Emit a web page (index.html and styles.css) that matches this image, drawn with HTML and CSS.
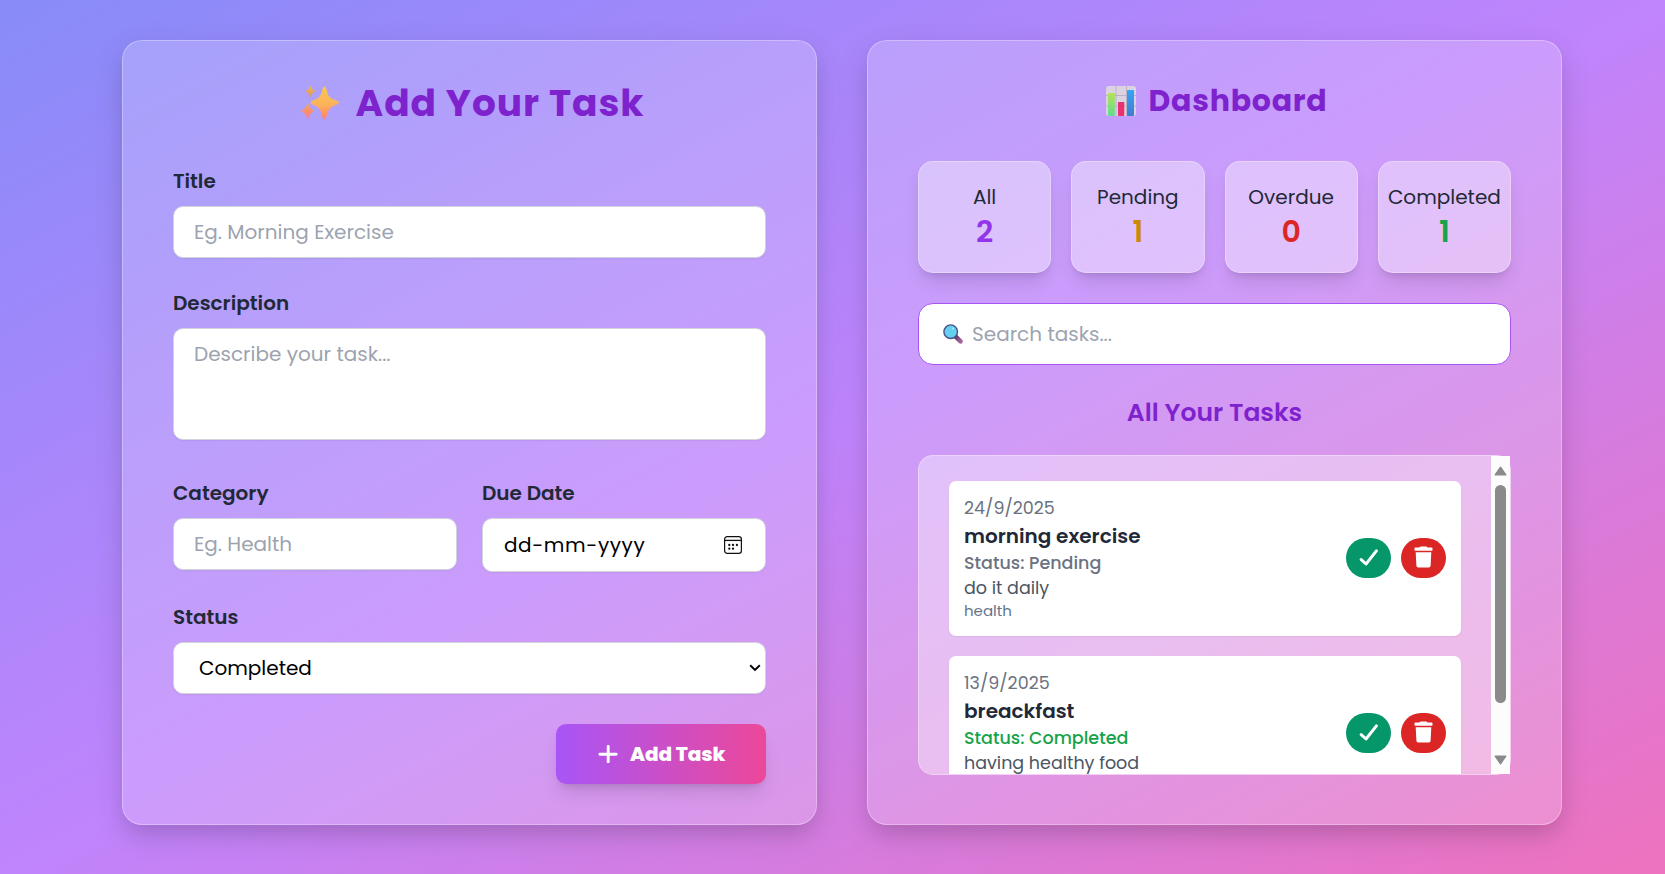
FILE: index.html
```html
<!DOCTYPE html>
<html lang="en">
<head>
<meta charset="utf-8">
<title>Task Manager</title>
<link rel="stylesheet" href="styles.css">
</head>
<body>
<svg width="0" height="0" class="defs">
  <defs>
    <linearGradient id="gold" x1="0" y1="0" x2="0" y2="1"><stop offset="0" stop-color="#f9c950"/><stop offset=".55" stop-color="#fbb25b"/><stop offset="1" stop-color="#ff8068"/></linearGradient>
    <linearGradient id="goldSmall" x1="0" y1="0" x2="0" y2="1"><stop offset="0" stop-color="#f0b94f"/><stop offset="1" stop-color="#dc9460"/></linearGradient>
    <linearGradient id="coral" x1="0" y1="0" x2="0" y2="1"><stop offset="0" stop-color="#f4a35c"/><stop offset="1" stop-color="#ff7f7c"/></linearGradient>
    <linearGradient id="green" x1="0" y1="0" x2="0" y2="1"><stop offset="0" stop-color="#b5e255"/><stop offset="1" stop-color="#5fdb91"/></linearGradient>
    <linearGradient id="blue" x1="0" y1="0" x2="0" y2="1"><stop offset="0" stop-color="#35a6f5"/><stop offset="1" stop-color="#3f7cd0"/></linearGradient>
    <linearGradient id="handle" x1="0" y1="0" x2="1" y2="1"><stop offset="0" stop-color="#633662"/><stop offset="1" stop-color="#a5669f"/></linearGradient>
    <symbol id="check" viewBox="0 0 20 18"><path d="M2.2 10.6 7 15 17.4 1.9" fill="none" stroke="#fff" stroke-width="3" stroke-linecap="round" stroke-linejoin="round"/></symbol>
    <symbol id="trash" viewBox="0 0 19 22"><path fill="#fff" d="M.5 2.4Q.5 1.6 1.3 1.6H5.3L6.2.8Q6.6.5 7.1.5H11.9Q12.400.5 12.800.8L13.700 1.600H17.700Q18.500 1.600 18.500 2.400V4.100Q18.500 4.700 17.900 4.700H1.100Q.500 4.700.500 4.100ZM1.700 6.300H17.300L16.600 19.700Q16.500 21.400 14.800 21.400H4.200Q2.500 21.400 2.400 19.700Z"/></symbol>
  </defs>
</svg>
<main class="page">
  <section class="card form-card">
    <h1 class="title">
      <svg class="sparkles" viewBox="0 0 38 34" width="38" height="34">
        <path fill="url(#gold)" d="M23.500.5Q25 .5 25.600 3.500C27 10 28.500 12.300 35 14.300Q37.900 15.300 37.900 16.700Q37.900 18.100 35 19C28.500 21 27.500 24 25.600 30.500Q24.700 33.300 23.300 33.300Q21.900 33.300 21.200 30.500C19.500 24 18.500 21 12.200 19Q9.500 18.100 9.500 16.700Q9.500 15.300 12.200 14.300C18.500 12.300 19.800 10 21.400 3.500Q22 .5 23.500.5Z"/>
        <path fill="url(#goldSmall)" stroke="url(#goldSmall)" stroke-width=".8" stroke-linejoin="round" d="M9.500.5Q10.300 3.900 14 5.200Q10.400 6.600 9.500 10.700Q8.400 6.600 5 5.200Q8.600 3.900 9.500.5Z"/>
        <path fill="url(#coral)" stroke="url(#coral)" stroke-width=".9" stroke-linejoin="round" d="M6.800 18Q7.900 22.800 12.700 24.900Q7.900 26.900 7 32.200Q5.500 27 .7 24.900Q5.600 22.800 6.800 18Z"/>
      </svg>
      <span>Add Your Task</span>
    </h1>
    <div class="field">
      <label class="label">Title</label>
      <input class="input" placeholder="Eg. Morning Exercise">
    </div>
    <div class="field">
      <label class="label">Description</label>
      <textarea class="input area" placeholder="Describe your task..."></textarea>
    </div>
    <div class="pair">
      <div class="field">
        <label class="label">Category</label>
        <input class="input" placeholder="Eg. Health">
      </div>
      <div class="field">
        <label class="label">Due Date</label>
        <div class="input date"><span>dd-mm-yyyy</span>
          <svg width="18" height="18" viewBox="0 0 18 18"><rect x=".6" y=".6" width="16.800" height="16.800" rx="2.600" fill="none" stroke="#111" stroke-width="1.200"/><path d="M1 4.400H17" stroke="#111" stroke-width="1.300"/><g fill="#111"><circle cx="5.300" cy="9" r="1.150"/><circle cx="9" cy="9" r="1.150"/><circle cx="12.900" cy="9" r="1.150"/><circle cx="5.300" cy="12.700" r="1.150"/><circle cx="9" cy="12.700" r="1.150"/></g></svg>
        </div>
      </div>
    </div>
    <div class="field">
      <label class="label">Status</label>
      <div class="input select"><span>Completed</span>
        <svg width="12" height="8" viewBox="0 0 12 8"><path d="M1.200 1.200 6 5.900 10.800 1.200" fill="none" stroke="#000" stroke-width="2"/></svg>
      </div>
    </div>
    <button class="add">
      <svg width="20" height="18" viewBox="0 0 20 18"><path d="M1.900 9.300H18.200M10.200 1.400V16.900" stroke="#fff" stroke-width="2.900" stroke-linecap="round"/></svg>
      <span>Add Task</span>
    </button>
  </section>

  <section class="card dash-card">
    <h2 class="title dash-title">
      <svg class="chart" width="30" height="30" viewBox="0 0 30 30">
        <rect width="30" height="30" rx="3" fill="#dcd3e2"/>
        <path d="M0 9.500H30M0 20H30M10 0V30M20.500 0V30" stroke="#b7adc2" stroke-width=".9"/>
        <rect x="2" y="7" width="6.800" height="23" rx=".8" fill="url(#green)"/>
        <rect x="12" y="16" width="6.300" height="14" rx=".8" fill="#e6336f"/>
        <rect x="21" y="4" width="7" height="26" rx=".8" fill="url(#blue)"/>
      </svg>
      <span>Dashboard</span>
    </h2>
    <div class="stats">
      <div class="stat"><span class="stat-name">All</span><span class="stat-num violet">2</span></div>
      <div class="stat"><span class="stat-name">Pending</span><span class="stat-num amber">1</span></div>
      <div class="stat"><span class="stat-name">Overdue</span><span class="stat-num red">0</span></div>
      <div class="stat"><span class="stat-name">Completed</span><span class="stat-num green">1</span></div>
    </div>
    <div class="search">
      <svg width="20" height="20" viewBox="0 0 20 20"><path d="M12.700 12.700 17.500 17.300" stroke="url(#handle)" stroke-width="4.600" stroke-linecap="round"/><circle cx="7.700" cy="7.700" r="6.800" fill="#62d0ee" stroke="#4b5186" stroke-width="1.400"/><circle cx="10" cy="4.600" r="1.100" fill="#a5e8fa"/></svg>
      <span>Search tasks...</span>
    </div>
    <h3 class="subtitle">All Your Tasks</h3>
    <div class="list">
      <div class="items">
        <article class="item">
          <div class="info">
            <span class="date-text">24/9/2025</span>
            <span class="name">morning exercise</span>
            <span class="status">Status: Pending</span>
            <span class="desc">do it daily</span>
            <span class="cat">health</span>
          </div>
          <button class="round ok"><svg width="20" height="18"><use href="#check"/></svg></button>
          <button class="round del"><svg width="19" height="22"><use href="#trash"/></svg></button>
        </article>
        <article class="item">
          <div class="info">
            <span class="date-text">13/9/2025</span>
            <span class="name">breackfast</span>
            <span class="status done">Status: Completed</span>
            <span class="desc">having healthy food</span>
          </div>
          <button class="round ok"><svg width="20" height="18"><use href="#check"/></svg></button>
          <button class="round del"><svg width="19" height="22"><use href="#trash"/></svg></button>
        </article>
      </div>
      <div class="scrollbar">
        <svg width="13" height="10" viewBox="0 0 13 10"><path d="M6.500 1.200 11.800 8.800H1.200Z" fill="#8a8a8a" stroke="#8a8a8a" stroke-width="1.400" stroke-linejoin="round"/></svg>
        <div class="thumb"></div>
        <svg class="down" width="13" height="10" viewBox="0 0 13 10"><path d="M6.500 8.800 11.800 1.200H1.200Z" fill="#8a8a8a" stroke="#8a8a8a" stroke-width="1.400" stroke-linejoin="round"/></svg>
      </div>
    </div>
  </section>
</main>
</body>
</html>
```
FILE: styles.css
```css
* { box-sizing: border-box; }
body {
  margin: 0;
  height: 874px;
  overflow: hidden;
  font-family: Poppins, Inter, "Open Sans", sans-serif;
  font-size: 20px;
  color: #1f2937;
  background: linear-gradient(to bottom right, #888bf9, #c084fc, #ee72be);
}
.defs { position: absolute; }
svg { display: block; flex: none; }
h1, h2, h3 { margin: 0; }
button { border: 0; font-family: inherit; }

.page { display: flex; gap: 50px; padding: 40px 0 0 122px; }
.card {
  display: flex;
  flex-direction: column;
  width: 695px;
  height: 785px;
  border: 1px solid rgba(255, 255, 255, .3);
  border-radius: 20px;
  background: rgba(255, 255, 255, .2);
  box-shadow: 0 10px 32px rgba(0, 0, 0, .12), 0 12px 20px -6px rgba(0, 0, 0, .1);
}
.form-card { padding: 38px 50px 0; }
.dash-card { padding: 40px 50px 0; }

.title {
  display: flex;
  align-items: center;
  justify-content: center;
  gap: 17px;
  height: 48px;
  margin-bottom: 39px;
  color: #7e22ce;
  font-size: 37.5px;
  font-weight: 700;
  letter-spacing: .94px;
}
.sparkles { margin-left: 6px; }
.chart { margin-left: 4px; }
.dash-title { height: 40px; margin-bottom: 40px; gap: 13px; font-size: 30px; letter-spacing: .75px; }

.field { display: flex; flex-direction: column; gap: 10px; margin-bottom: 30px; }
.label { height: 30px; line-height: 30px; font-weight: 600; }
.input {
  display: block;
  width: 100%;
  height: 52px;
  padding: 0 20px;
  border: 1px solid #d1d5db;
  border-radius: 10px;
  outline: 0;
  background: #fff;
  box-shadow: 0 1px 2px rgba(0, 0, 0, .06);
  font: 400 20px Poppins, Inter, "Open Sans", sans-serif;
  resize: none;
}
.input::placeholder { color: #9ca3af; opacity: 1; }
.area { height: 112px; padding: 10px 20px; line-height: 30px; margin-bottom: 8px; overflow: hidden; }
.pair { display: grid; grid-template-columns: 1fr 1fr; gap: 25px; }
.date, .select { display: flex; align-items: center; justify-content: space-between; color: #000; }
.date { height: 54px; padding: 0 23px 0 21px; letter-spacing: .6px; }
.select { padding: 0 4px 0 25px; }
.add {
  display: flex;
  align-self: flex-end;
  align-items: center;
  gap: 12px;
  width: 210px;
  height: 60px;
  padding: 0 0 0 42px;
  border-radius: 10px;
  color: #fff;
  background: linear-gradient(to right, #a855f7, #ec4899);
  box-shadow: 0 12px 19px -4px rgba(0, 0, 0, .12), 0 5px 7px -4px rgba(0, 0, 0, .12);
  font-size: 20px;
  font-weight: 800;
  letter-spacing: -.1px;
}

.stats { display: grid; grid-template-columns: repeat(4, 1fr); gap: 20px; margin-bottom: 30px; }
.stat {
  display: flex;
  flex-direction: column;
  align-items: center;
  height: 112px;
  padding-top: 20px;
  border: 1px solid rgba(255, 255, 255, .3);
  border-radius: 15px;
  background: rgba(255, 255, 255, .38);
  box-shadow: 0 12px 19px -4px rgba(0, 0, 0, .12), 0 5px 7px -4px rgba(0, 0, 0, .12);
}
.stat-name { height: 30px; line-height: 30px; }
.stat-num { height: 40px; line-height: 39px; font-size: 30px; font-weight: 600; }
.violet { color: #9333ea; }
.amber { color: #ca8a04; }
.red { color: #dc2626; }
.green { color: #16a34a; }

.search {
  display: flex;
  align-items: center;
  gap: 9px;
  height: 62px;
  padding-left: 24px;
  border: 1px solid #a855f7;
  border-radius: 15px;
  background: #fff;
  color: #9ca3af;
}
.subtitle {
  margin: 33px 0 27px;
  height: 30px;
  line-height: 30px;
  text-align: center;
  color: #7e22ce;
  font-size: 25px;
  font-weight: 600;
}

.list {
  display: flex;
  height: 320px;
  border: 1px solid rgba(255, 255, 255, .3);
  border-radius: 15px;
  background: rgba(255, 255, 255, .38);
}
.items { flex: 1; padding: 25px 30px 0; overflow: hidden; }
.item {
  display: flex;
  align-items: center;
  gap: 10px;
  height: 155px;
  margin-bottom: 20px;
  padding: 0 15px;
  border-radius: 7px;
  background: #fff;
  box-shadow: 0 1px 2px rgba(0, 0, 0, .06);
}
.info {
  display: flex;
  flex: 1;
  flex-direction: column;
  align-self: flex-start;
  padding-top: 15px;
  font-size: 17.5px;
  line-height: 25px;
  color: #4b5563;
}
.date-text { color: #6b7280; }
.name { line-height: 30px; font-size: 20px; font-weight: 600; color: #1f2937; }
.status { font-weight: 500; color: #6b7280; }
.done { color: #16a34a; }
.cat { line-height: 20px; font-size: 15px; color: #64748b; }
.round {
  display: flex;
  align-items: center;
  justify-content: center;
  width: 45px;
  height: 40px;
  margin-bottom: 1px;
  padding: 0;
  border-radius: 20px;
}
.ok { background: #059669; }
.del { background: #dc2626; }
.del svg { margin-top: -2px; }
.scrollbar {
  display: flex;
  flex-direction: column;
  align-items: center;
  width: 19px;
  padding: 10px 0 9px;
  background: #fcfcfc;
}
.thumb { width: 11px; height: 218px; margin-top: 9px; border-radius: 6px; background: #8a8a8a; }
.down { margin-top: auto; }
```
